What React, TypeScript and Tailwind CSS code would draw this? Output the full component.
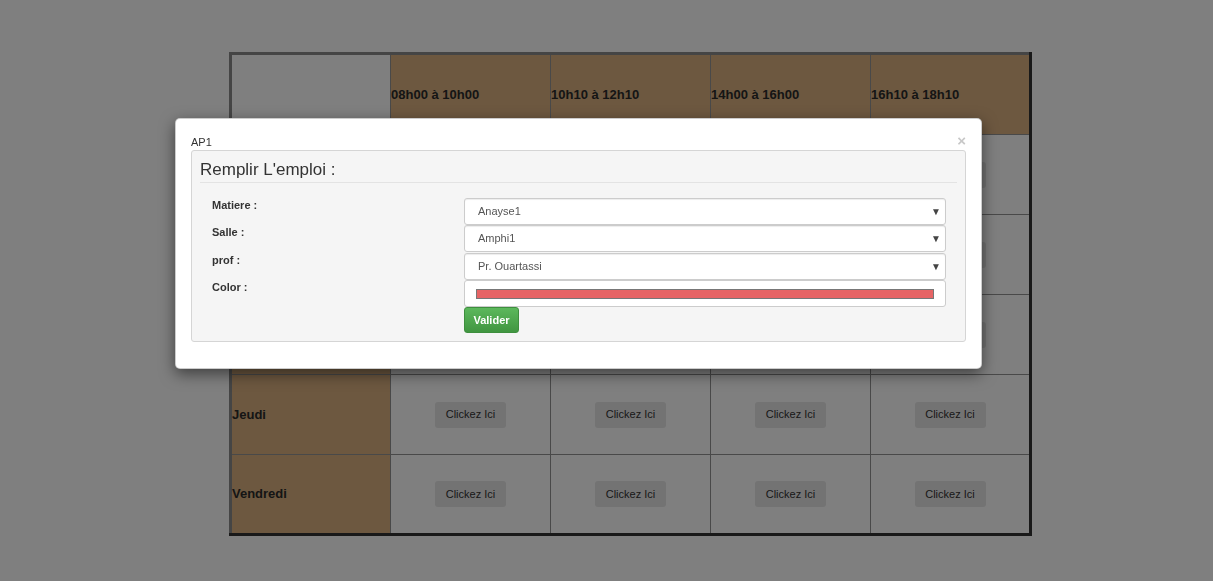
import { useState } from "react";

const slots = ["08h00 à 10h00", "10h10 à 12h10", "14h00 à 16h00", "16h10 à 18h10"];
const days = ["Lundi", "Mardi", "Mercredi", "Jeudi", "Vendredi"];

function SelectBox({ value }: { value: string }) {
  return (
    <div className="flex h-[27px] items-center justify-between rounded-[3px] border border-[#ccc] bg-white pl-[13px] pr-[4px] text-[11px] text-[#555] shadow-[inset_0_1px_1px_rgba(0,0,0,0.075)]">
      <span>{value}</span>
      <span className="text-[10px] text-[#444]">▼</span>
    </div>
  );
}

export default function App() {
  const [color] = useState("#e66465");

  return (
    <div className="relative min-h-[581px] bg-white font-['Liberation_Sans',Arial,sans-serif] text-[#333]">
      <div className="pl-[229px] pt-[52px]">
        <table className="w-[803px] table-fixed border-collapse border-[3px] border-t-[#8a8a8a] border-l-[#8a8a8a] border-b-[#333] border-r-[#333]">
          <thead>
            <tr className="h-[81px]">
              <th className="w-[160px] border border-[#939393] bg-white"></th>
              {slots.map((s) => (
                <th key={s} className="w-[160px] border border-[#939393] bg-[#dab180] p-0 text-left text-[13px] font-bold text-[#2a2a2a]">
                  {s}
                </th>
              ))}
            </tr>
          </thead>
          <tbody>
            {days.map((d) => (
              <tr key={d} className="h-[80px]">
                <td className="border border-[#939393] bg-[#dab180] p-0 text-[13px] font-bold text-[#2a2a2a]">{d}</td>
                {slots.map((s) => (
                  <td key={s} className="border border-[#939393] p-0 text-center">
                    <span className="inline-flex h-[26px] w-[71px] items-center justify-center rounded-[3px] bg-[#e6e6e6] text-[11px] text-[#333]">
                      Clickez Ici
                    </span>
                  </td>
                ))}
              </tr>
            ))}
          </tbody>
        </table>
      </div>

      <div className="fixed inset-0 bg-black opacity-50"></div>

      <div className="absolute left-[175px] top-[118px] w-[807px] rounded-[5px] border border-black/20 bg-white px-[15px] pb-[26px] pt-[15px] shadow-[0_5px_15px_rgba(0,0,0,0.5)]">
        <div className="flex h-4 items-center justify-between text-[11px] text-[#333]">
          <span>AP1</span>
          <span className="-mt-[3px] text-[15px] font-bold leading-none text-[#c8c8c8]">×</span>
        </div>
        <div className="rounded-[3px] border border-[#d5d5d5] bg-[#f5f5f5] px-2 pb-2 pt-2">
          <h2 className="border-b border-[#e3e3e3] pb-[2px] pt-px text-[17px] font-normal leading-[20px] text-[#333]">Remplir L'emploi :</h2>
          <div className="mt-[15px] grid grid-cols-[252px_1fr] pl-3 pr-[11px]">
            <div className="flex flex-col text-[11px] font-bold leading-[14px] text-[#333]">
              <label className="h-[27px]">Matiere :</label>
              <label className="h-[28px]">Salle :</label>
              <label className="h-[27px]">prof :</label>
              <label className="h-[27px]">Color :</label>
            </div>
            <div className="flex flex-col">
              <SelectBox value="Anayse1" />
              <SelectBox value="Amphi1" />
              <div className="mt-px">
                <SelectBox value="Pr. Ouartassi" />
              </div>
              <div className="flex h-[27px] items-center rounded-[3px] border border-[#ccc] bg-white px-[11px]">
                <div className="h-[10px] w-full border border-[#777]" style={{ backgroundColor: color }}></div>
              </div>
              <div>
                <button className="h-[26px] w-[55px] rounded-[3px] border border-[#3e8f3e] bg-gradient-to-b from-[#5cb85c] to-[#419641] text-[11px] font-bold text-white">
                  Valider
                </button>
              </div>
            </div>
          </div>
        </div>
      </div>
    </div>
  );
}
